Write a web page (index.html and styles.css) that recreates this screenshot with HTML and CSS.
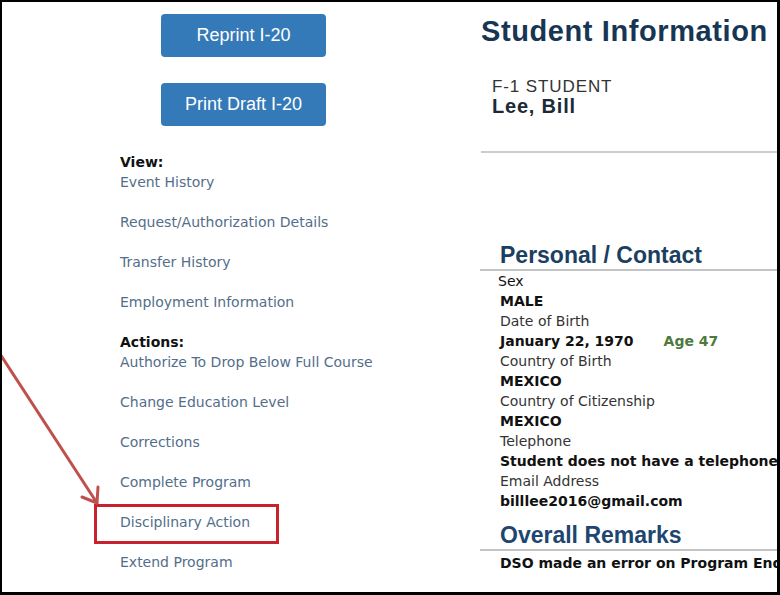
FILE: index.html
```html
<!DOCTYPE html>
<html lang="en">
<head>
<meta charset="utf-8">
<title>Student Information</title>
<link rel="stylesheet" href="styles.css">
</head>
<body>
<div class="frame">
  <aside class="sidebar">
    <div class="buttons">
      <a class="btn" href="#">Reprint I-20</a>
      <a class="btn" href="#">Print Draft I-20</a>
    </div>
    <nav class="nav">
      <div class="nav-group">
        <div class="nav-title">View:</div>
        <ul class="nav-list">
          <li><a href="#">Event History</a></li>
          <li><a href="#">Request/Authorization Details</a></li>
          <li><a href="#">Transfer History</a></li>
          <li><a href="#">Employment Information</a></li>
        </ul>
      </div>
      <div class="nav-group">
        <div class="nav-title">Actions:</div>
        <ul class="nav-list">
          <li><a href="#">Authorize To Drop Below Full Course</a></li>
          <li><a href="#">Change Education Level</a></li>
          <li><a href="#">Corrections</a></li>
          <li><a href="#">Complete Program</a></li>
          <li class="highlight"><a href="#">Disciplinary Action</a></li>
          <li><a href="#">Extend Program</a></li>
        </ul>
      </div>
    </nav>
  </aside>

  <main class="content">
    <h1 class="page-title">Student Information</h1>
    <div class="student-id">
      <div class="student-type">F-1 STUDENT</div>
      <div class="student-name">Lee, Bill</div>
    </div>

    <h2 class="section-title">Personal / Contact</h2>
    <dl class="details">
      <dt class="first">Sex</dt>
      <dd>MALE</dd>
      <dt>Date of Birth</dt>
      <dd>January 22, 1970<span class="age">Age 47</span></dd>
      <dt>Country of Birth</dt>
      <dd>MEXICO</dd>
      <dt>Country of Citizenship</dt>
      <dd>MEXICO</dd>
      <dt>Telephone</dt>
      <dd>Student does not have a telephone</dd>
      <dt>Email Address</dt>
      <dd>billlee2016@gmail.com</dd>
    </dl>

    <h2 class="section-title remarks-title">Overall Remarks</h2>
    <p class="remarks">DSO made an error on Program End Date</p>
  </main>

  <svg class="arrow" width="780" height="595" viewBox="0 0 780 595" aria-hidden="true">
    <line x1="-2" y1="352" x2="95" y2="501" />
    <polyline points="96,485 95,501 80,495" />
  </svg>
</div>
</body>
</html>
```

FILE: styles.css
```css
* {
  box-sizing: border-box;
}

html, body {
  margin: 0;
  padding: 0;
  background: #ffffff;
}

.frame {
  position: relative;
  width: 780px;
  height: 595px;
  border-style: solid;
  border-color: #000000;
  border-width: 2px 3px 3px 2px;
  overflow: hidden;
  display: flex;
  background: #ffffff;
  font-family: "DejaVu Sans", Verdana, sans-serif;
  font-size: 14px;
  line-height: 20px;
}

/* ---------- Sidebar ---------- */
.sidebar {
  width: 478px;
  flex-shrink: 0;
  padding-top: 12px;
}

.buttons {
  display: flex;
  flex-direction: column;
  gap: 26px;
  margin-left: 159px;
}

.btn {
  display: block;
  width: 165px;
  height: 43px;
  line-height: 43px;
  text-align: center;
  background: #347ab8;
  color: #ffffff;
  border-radius: 4px;
  text-decoration: none;
  font-family: "Liberation Sans", Arial, sans-serif;
  font-size: 18px;
}

.nav {
  margin-top: 26px;
  padding-left: 118px;
}

.nav-title {
  font-weight: bold;
  color: #111111;
}

.nav-list {
  list-style: none;
  margin: 0;
  padding: 0;
}

.nav-list li {
  margin-bottom: 20px;
  white-space: nowrap;
}

.nav-list a {
  color: #536e8a;
  text-decoration: none;
}

.highlight {
  position: relative;
}

.highlight::after {
  content: "";
  position: absolute;
  left: -26px;
  top: -8px;
  width: 179px;
  height: 34px;
  border: 3px solid #c6232f;
}

/* ---------- Content ---------- */
.content {
  flex: 1;
  min-width: 0;
  padding-top: 13px;
  white-space: nowrap;
}

.page-title {
  margin: 0 0 0 1px;
  font-family: "Liberation Sans", Arial, sans-serif;
  font-size: 29px;
  line-height: 32px;
  font-weight: bold;
  letter-spacing: 0.6px;
  color: #173654;
}

.student-id {
  margin: 31px 0 0 1px;
  padding: 0 0 35px 11px;
  border-bottom: 2px solid #cccccc;
  font-family: "Liberation Sans", Arial, sans-serif;
}

.student-type {
  font-size: 17px;
  line-height: 18px;
  letter-spacing: 0.9px;
  color: #333333;
}

.student-name {
  font-size: 20px;
  line-height: 20px;
  font-weight: bold;
  letter-spacing: 0.8px;
  color: #1c2a38;
}

.section-title {
  margin: 88px 0 0 0;
  padding-left: 20px;
  font-family: "Liberation Sans", Arial, sans-serif;
  font-size: 23px;
  line-height: 28px;
  font-weight: bold;
  color: #1c3e5f;
  border-bottom: 2px solid #c4c4c4;
}

.details {
  margin: 0;
  padding-left: 20px;
}

.details dt {
  color: #333333;
}

.details dt.first {
  margin-left: -2px;
  color: #111111;
}

.details dd {
  margin: 0;
  font-weight: bold;
  color: #111111;
}

.age {
  margin-left: 30px;
  color: #4d7a3d;
}

.remarks-title {
  margin-top: 10px;
  color: #1d4670;
}

.remarks {
  margin: 2px 0 0 0;
  padding-left: 20px;
  font-weight: bold;
  color: #111111;
}

/* ---------- Annotation arrow ---------- */
.arrow {
  position: absolute;
  left: 0;
  top: 0;
  pointer-events: none;
}

.arrow line,
.arrow polyline {
  fill: none;
  stroke: #c0504d;
  stroke-width: 3;
  stroke-linecap: round;
  stroke-linejoin: round;
}
```
